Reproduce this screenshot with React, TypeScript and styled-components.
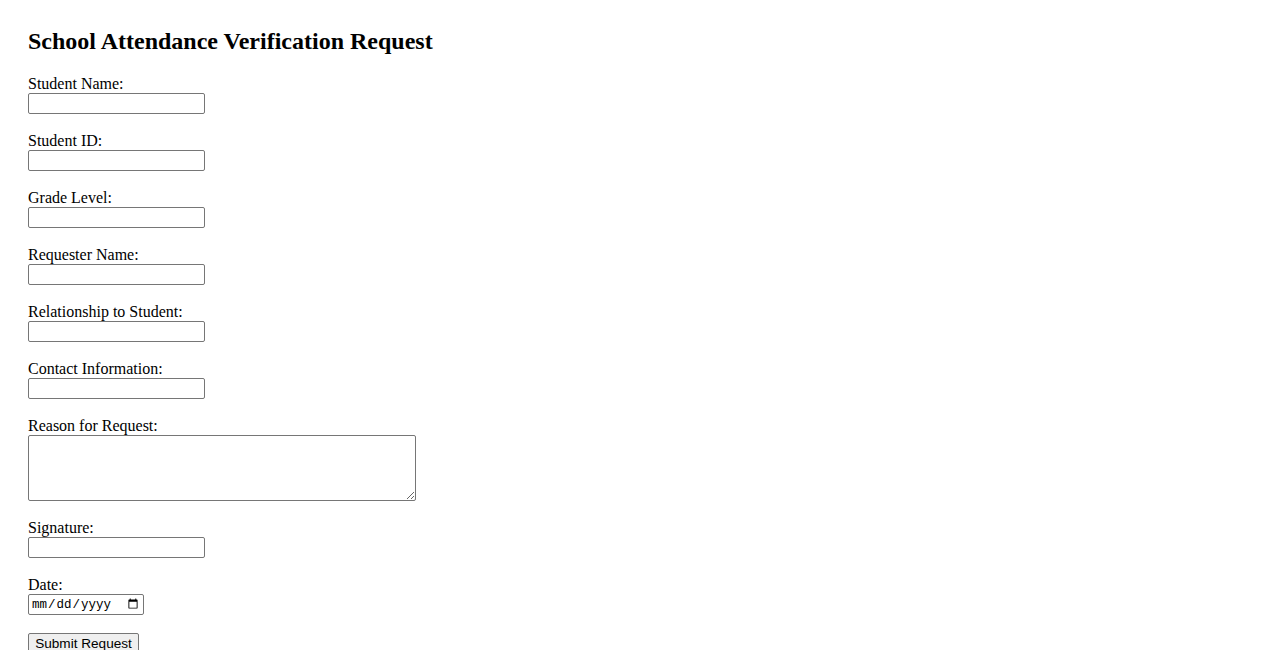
import styled, { createGlobalStyle } from "styled-components";

const GlobalStyle = createGlobalStyle`
  body {
    margin: 0;
    padding: 20px 28px;
    font-family: "Liberation Serif", "Times New Roman", serif;
    font-size: 16px;
    color: #000;
    background: #fff;
  }
`;

const Title = styled.h2`
  font-size: 24px;
  font-weight: bold;
  margin: 8px 0 20px;
`;

const Form = styled.form`
  display: flex;
  flex-direction: column;
`;

const Field = styled.div`
  display: flex;
  flex-direction: column;
  align-items: flex-start;
  margin-bottom: 18px;
`;

const Label = styled.label`
  line-height: 18px;
`;

const TextInput = styled.input<{ $width?: number }>`
  box-sizing: border-box;
  width: ${(p) => p.$width ?? 177}px;
  height: 21px;
  padding: 1px 2px;
  border: 1px solid #767676;
  border-radius: 2px;
  font-family: "Liberation Sans", Arial, sans-serif;
  font-size: 13.33px;
  margin: 0;
`;

const DateInput = styled(TextInput)`
  font-family: "Liberation Mono", "DejaVu Sans Mono", monospace;
  font-size: 12.5px;
  color: #000;
`;

const TextArea = styled.textarea`
  box-sizing: border-box;
  width: 388px;
  height: 66px;
  padding: 2px;
  border: 1px solid #767676;
  border-radius: 2px;
  font-family: "Liberation Mono", monospace;
  font-size: 13.33px;
  margin: 0;
`;

const SubmitButton = styled.button`
  align-self: flex-start;
  box-sizing: border-box;
  width: 111px;
  height: 21px;
  padding: 0 4px;
  border: 1px solid #767676;
  border-radius: 2px;
  background: #efefef;
  font-family: "Liberation Sans", Arial, sans-serif;
  font-size: 13.6px;
  line-height: 17px;
  white-space: nowrap;
  color: #000;
`;

const fields = [
  { id: "studentName", label: "Student Name:" },
  { id: "studentId", label: "Student ID:" },
  { id: "gradeLevel", label: "Grade Level:" },
  { id: "requesterName", label: "Requester Name:" },
  { id: "relationship", label: "Relationship to Student:" },
  { id: "contact", label: "Contact Information:" },
];

export default function App() {
  return (
    <>
      <GlobalStyle />
      <Title>School Attendance Verification Request</Title>
      <Form onSubmit={(e) => e.preventDefault()}>
        {fields.map((f) => (
          <Field key={f.id}>
            <Label htmlFor={f.id}>{f.label}</Label>
            <TextInput id={f.id} type="text" />
          </Field>
        ))}
        <Field>
          <Label htmlFor="reason">Reason for Request:</Label>
          <TextArea id="reason" />
        </Field>
        <Field>
          <Label htmlFor="signature">Signature:</Label>
          <TextInput id="signature" type="text" />
        </Field>
        <Field>
          <Label htmlFor="date">Date:</Label>
          <DateInput id="date" type="date" $width={116} />
        </Field>
        <SubmitButton type="submit">Submit Request</SubmitButton>
      </Form>
    </>
  );
}
